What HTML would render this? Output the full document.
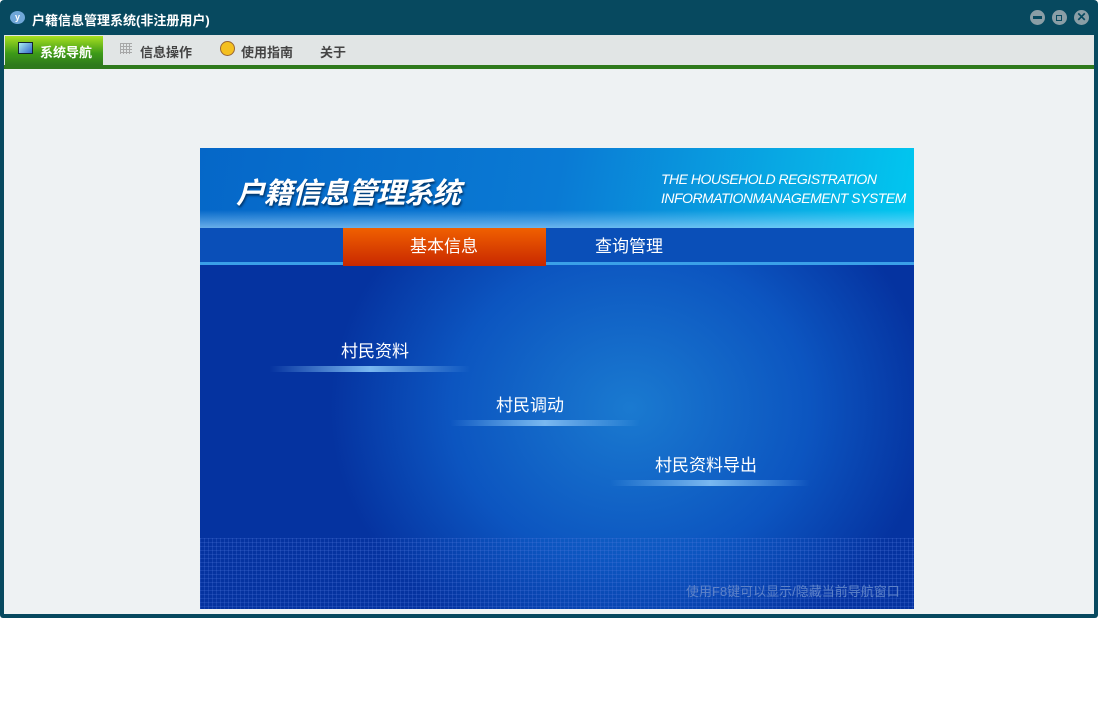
<!DOCTYPE html>
<html><head><meta charset="utf-8"><style>
*{margin:0;padding:0;box-sizing:border-box}
body{width:1099px;height:723px;background:#fff;font-family:"Liberation Sans","Noto Sans CJK SC",sans-serif;position:relative;overflow:hidden}
.win{position:absolute;left:0;top:0;width:1098px;height:618px;background:#07495f;border-radius:4px 4px 3px 3px}
.title{position:absolute;left:32px;top:10px;color:#fff;font-size:13px;font-weight:bold}
.logo{position:absolute;left:10px;top:11px;width:15px;height:13px;border-radius:50%;background:#6fa7d8;color:#fff;font-size:9px;font-weight:bold;text-align:center;line-height:13px}
.btn{position:absolute;top:10px;width:15px;height:15px;border-radius:50%;background:#8a9ea6}
.client{position:absolute;left:4px;top:35px;width:1090px;height:579px;background:#eef2f3}
.menu{position:absolute;left:0;top:0;width:1090px;height:30px;background:#e1e5e5}
.green{position:absolute;left:0;top:30px;width:1090px;height:4px;background:#2e7a1c}
.mi{position:absolute;top:7px;font-size:13px;font-weight:bold;color:#444}
.act{position:absolute;left:1px;top:1px;width:98px;height:29px;background:linear-gradient(#a8e020,#3d9a18 60%,#2e7a1c)}
.pic{position:absolute;left:196px;top:113px;width:714px;height:461px;overflow:hidden;background:radial-gradient(ellipse 300px 260px at 430px 260px,#1a7ad0,#0c55c0 60%,#0533a0 100%)}
.hdr{position:absolute;left:0;top:0;width:714px;height:80px;background:linear-gradient(100deg,#0567c8,#0a7ad4 50%,#08b0e6 85%,#00c8f0)}
.glow{position:absolute;left:0;top:62px;width:714px;height:18px;background:linear-gradient(transparent,rgba(170,220,255,.6))}
.nav{position:absolute;left:0;top:80px;width:714px;height:37px;background:#0a4fb8;border-bottom:3px solid #3aa0e8}
.on{position:absolute;left:143px;top:80px;width:203px;height:38px;background:linear-gradient(#f06000,#c82800)}
.t{position:absolute;color:#fff}
</style></head><body>
<div class="win">
<div class="logo">y</div>
<div class="title">户籍信息管理系统(非注册用户)</div>
<div class="btn" style="left:1030px"><div style="position:absolute;left:3px;top:6px;width:9px;height:3px;background:#07495f"></div></div>
<div class="btn" style="left:1052px"><div style="position:absolute;left:4px;top:5px;width:6px;height:6px;border:1.5px solid #07495f"></div></div>
<div class="btn" style="left:1074px;color:#07495f;font-size:12px;text-align:center;line-height:15px;font-weight:bold">✕</div>
<div class="client">
<div class="menu">
<div class="act"></div>
<div style="position:absolute;left:14px;top:7px;width:15px;height:12px;border:1.5px solid #123;background:linear-gradient(135deg,#aee,#36c)"></div>
<div class="mi" style="left:36px;color:#fff">系统导航</div>
<div style="position:absolute;left:116px;top:8px;width:12px;height:11px;background:repeating-linear-gradient(90deg,#999 0 1px,transparent 1px 3px),repeating-linear-gradient(#999 0 1px,transparent 1px 3px);opacity:.8"></div>
<div class="mi" style="left:136px">信息操作</div>
<div style="position:absolute;left:216px;top:6px;width:15px;height:15px;border-radius:50%;background:#f4c020;border:1px solid #963"></div>
<div class="mi" style="left:237px">使用指南</div>
<div class="mi" style="left:316px">关于</div>
</div>
<div class="green"></div>
<div class="pic">
<div class="hdr"></div>
<div class="glow"></div>
<div class="t" style="left:36px;top:22px;font-size:29px;font-weight:bold;font-style:italic;letter-spacing:-1px;text-shadow:1px 2px 2px #036">户籍信息管理系统</div>
<div class="t" style="left:461px;top:22px;font-size:14px;font-style:italic;line-height:19px;letter-spacing:-.5px">THE HOUSEHOLD REGISTRATION<br>INFORMATIONMANAGEMENT SYSTEM</div>
<div class="nav"></div>
<div class="on"></div>
<div class="t" style="left:210px;top:84px;font-size:17px">基本信息</div>
<div class="t" style="left:395px;top:84px;font-size:17px">查询管理</div>
<div style="position:absolute;left:70px;top:218px;width:200px;height:6px;background:linear-gradient(90deg,transparent,#7ab8f0,transparent)"></div>
<div class="t" style="left:141px;top:189px;font-size:17px">村民资料</div>
<div style="position:absolute;left:250px;top:272px;width:190px;height:6px;background:linear-gradient(90deg,transparent,#7ab8f0,transparent)"></div>
<div class="t" style="left:296px;top:243px;font-size:17px">村民调动</div>
<div style="position:absolute;left:410px;top:332px;width:200px;height:6px;background:linear-gradient(90deg,transparent,#7ab8f0,transparent)"></div>
<div class="t" style="left:455px;top:303px;font-size:17px">村民资料导出</div>
<div style="position:absolute;left:0;top:390px;width:714px;height:71px;background:repeating-linear-gradient(90deg,rgba(80,120,220,.25) 0 1px,transparent 1px 4px),repeating-linear-gradient(rgba(80,120,220,.25) 0 1px,transparent 1px 4px)"></div>
<div style="position:absolute;left:486px;top:433px;font-size:13px;color:#5f83c8">使用F8键可以显示/隐藏当前导航窗口</div>
</div>
</div>
</div>
</body></html>
